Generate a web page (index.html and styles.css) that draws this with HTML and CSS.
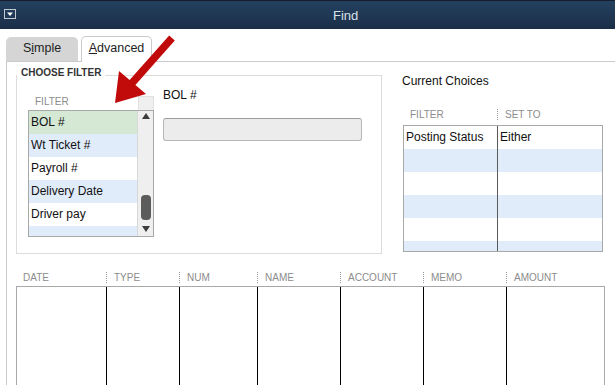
FILE: index.html
```html
<!DOCTYPE html>
<html>
<head>
<meta charset="utf-8">
<link rel="stylesheet" href="styles.css">
</head>
<body>
<div class="window">
  <div class="titlebar">
    <svg class="sysicon" width="12" height="10" viewBox="0 0 12 10">
      <rect x="0.5" y="0.5" width="11" height="9" fill="#1e3956" stroke="#c3c8d0"/>
      <polygon points="3,3.5 9,3.5 6,7" fill="#ffffff"/>
    </svg>
    <span class="title">Find</span>
  </div>

  <div class="tabs">
    <div class="tab simple">S<u>i</u>mple</div>
    <div class="tab active"><u>A</u>dvanced</div>
  </div>

  <div class="panel">
    <div class="top">
      <fieldset class="choose">
        <legend>CHOOSE FILTER</legend>
        <div class="choose-body">
          <div class="filterlist">
            <div class="lh"><span class="lh-text">FILTER</span><span class="lh-sb"></span></div>
            <div class="listbox">
              <div class="rows">
                <div class="row green">BOL #</div>
                <div class="row blue">Wt Ticket #</div>
                <div class="row">Payroll #</div>
                <div class="row blue">Delivery Date</div>
                <div class="row">Driver pay</div>
                <div class="row blue"></div>
              </div>
              <div class="scrollbar">
                <div class="sb-up"><svg width="8" height="6" viewBox="0 0 8 6"><polygon points="0,6 8,6 4,0" fill="#3c3c3c"/></svg></div>
                <div class="sb-thumb"></div>
                <div class="sb-down"><svg width="8" height="6" viewBox="0 0 8 6"><polygon points="0,0 8,0 4,6" fill="#3c3c3c"/></svg></div>
              </div>
            </div>
          </div>
          <div class="field">
            <div class="field-label">BOL #</div>
            <div class="input"></div>
          </div>
        </div>
      </fieldset>

      <div class="current">
        <div class="cc-title">Current Choices</div>
        <div class="hdr cc-hdr"><span>FILTER</span><span>SET TO</span></div>
        <div class="cc-table">
          <div class="cc-row"><span>Posting Status</span><span>Either</span></div>
          <div class="cc-row blue"><span></span><span></span></div>
          <div class="cc-row"><span></span><span></span></div>
          <div class="cc-row blue"><span></span><span></span></div>
          <div class="cc-row"><span></span><span></span></div>
          <div class="cc-row blue"><span></span><span></span></div>
        </div>
      </div>
    </div>

    <div class="results">
      <div class="hdr res-hdr">
        <span>DATE</span><span>TYPE</span><span>NUM</span><span>NAME</span><span>ACCOUNT</span><span>MEMO</span><span>AMOUNT</span>
      </div>
      <div class="res-body">
        <div></div><div></div><div></div><div></div><div></div><div></div><div></div>
      </div>
    </div>
  </div>

  <svg class="arrow" width="615" height="385" viewBox="0 0 615 385">
    <polygon points="169.2,35.5 174.8,40.5 135.4,85 146,94 115,103 119,71 129.6,80" fill="#c10a0a"/>
  </svg>
</div>
</body>
</html>
```

FILE: styles.css
```css
* { box-sizing: border-box; }

body {
  margin: 0;
  font-family: "Liberation Sans", Arial, sans-serif;
  background: #ffffff;
  color: #111;
}

.window {
  position: relative;
  width: 615px;
  height: 385px;
  overflow: hidden;
  background: #ffffff;
}

/* Title bar */
.titlebar {
  height: 29px;
  display: flex;
  align-items: flex-start;
  background: linear-gradient(#23415f, #1b2e48);
  border-top: 1px solid #151e2e;
}

.sysicon {
  margin-left: 4px;
  margin-top: 8px;
  flex: none;
}

.title {
  margin-left: 317px;
  margin-top: 7px;
  font-size: 13px;
  line-height: 15px;
  color: #d9e0e8;
}

/* Tabs */
.tabs {
  display: flex;
  align-items: flex-end;
  gap: 3px;
  height: 25px;
  margin-top: 7px;
  padding-left: 6px;
}

.tab {
  display: flex;
  align-items: center;
  justify-content: center;
  padding-bottom: 3px;
  font-size: 12.5px;
  color: #222;
  border-radius: 5px 5px 0 0;
}

.tab.simple {
  width: 72px;
  height: 24px;
  background: #d5d5d5;
}

.tab.active {
  position: relative;
  width: 71px;
  height: 26px;
  margin-bottom: -1px;
  background: #ffffff;
  border: 1px solid #cacaca;
  border-bottom: none;
}

/* Panel */
.panel {
  margin-left: 6px;
  border-top: 1px solid #cacaca;
  border-left: 1px solid #cacaca;
}

.top {
  display: flex;
  align-items: flex-start;
  padding-left: 9px;
}

.choose {
  margin: 5px 0 0 0;
  padding: 0 0 16px 0;
  width: 366px;
  min-width: 0;
  border: 1px solid #dcdcdc;
}

.choose legend {
  font-size: 10px;
  font-weight: bold;
  color: #333;
  line-height: 12px;
  padding: 0 4px 4px 4px;
}

.choose-body {
  display: flex;
  align-items: flex-start;
  gap: 9px;
  padding-left: 11px;
}

.filterlist {
  width: 126px;
  margin-top: 13px;
}

.lh {
  display: flex;
  height: 14px;
}

.lh-text {
  flex: 1;
  padding-left: 7px;
  font-size: 10px;
  line-height: 11px;
  color: #8c8c8c;
}

.lh-sb {
  width: 16px;
  background: #efefef;
  border: 1px solid #e0e0e0;
  border-bottom: none;
}

.listbox {
  height: 127px;
  border: 1px solid #a8a8a8;
  display: grid;
  grid-template-columns: 1fr 16px;
  overflow: hidden;
}

.rows {
  overflow: hidden;
}

.row {
  height: 23px;
  line-height: 23px;
  padding-left: 2px;
  font-size: 12px;
  color: #111;
  white-space: nowrap;
}

.row.green { background: #d4e8d3; }
.row.blue { background: #e1ecfb; }

.scrollbar {
  display: flex;
  flex-direction: column;
  align-items: center;
  background: #efefef;
  border-left: 1px solid #d8d8d8;
}

.sb-up {
  height: 16px;
  padding-top: 2px;
  display: flex;
  justify-content: center;
}

.sb-thumb {
  width: 10px;
  height: 25px;
  margin-top: auto;
  margin-bottom: 2px;
  background: #5c5c5c;
  border-radius: 4px;
}

.sb-down {
  height: 14px;
  display: flex;
  align-items: center;
  justify-content: center;
}

.field {
  margin-top: 5px;
}

.field-label {
  font-size: 12px;
  line-height: 14px;
  color: #111;
}

.input {
  margin-top: 16px;
  width: 199px;
  height: 23px;
  background: #ececec;
  border: 1px solid #b6b6b6;
  border-top-color: #9c9c9c;
  border-radius: 3px;
}

/* Current choices */
.current {
  margin-left: 20px;
  margin-top: 12px;
}

.cc-title {
  font-size: 12px;
  line-height: 14px;
  color: #111;
}

.hdr {
  font-size: 10px;
  line-height: 11px;
  color: #8c8c8c;
}

.hdr span {
  padding-left: 7px;
  white-space: nowrap;
}

.hdr span + span {
  border-left: 1px dotted #999;
}

.cc-hdr {
  margin-top: 21px;
  display: grid;
  grid-template-columns: 95px 1fr;
}

.cc-hdr span:first-child {
  padding-left: 8px;
}

.cc-table {
  margin-top: 5px;
  margin-left: 1px;
  width: 200px;
  height: 127px;
  border: 1px solid #a8a8a8;
  overflow: hidden;
}

.cc-row {
  display: grid;
  grid-template-columns: 93px 1fr;
  height: 23px;
  line-height: 23px;
  font-size: 12px;
  color: #111;
}

.cc-row.blue { background: #e1ecfb; }

.cc-row span {
  padding-left: 2px;
  white-space: nowrap;
}

.cc-row span + span {
  border-left: 1px solid #5a5a5a;
}

/* Results */
.results {
  margin-left: 9px;
  margin-top: 18px;
}

.res-hdr {
  display: grid;
  grid-template-columns: 90px 73px 78px 83px 83px 83px 98px;
}

.res-body {
  margin-top: 3px;
  width: 589px;
  height: 110px;
  border: 1px solid #a8a8a8;
  border-bottom: none;
  display: grid;
  grid-template-columns: 89px 73px 78px 83px 83px 83px 98px;
}

.res-body div + div {
  border-left: 1px solid #000;
}

/* Annotation arrow overlay */
.arrow {
  position: absolute;
  left: 0;
  top: 0;
  pointer-events: none;
}
```
